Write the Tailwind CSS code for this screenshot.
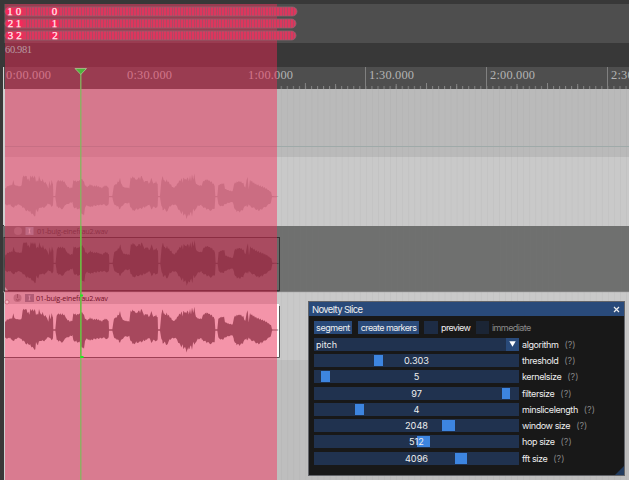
<!DOCTYPE html>
<html lang="en">
<head>
  <meta charset="UTF-8" />
  <meta name="viewport" content="width=device-width, initial-scale=1.0" />
  <title>Novelty Slice</title>
  <script src="https://cdn.jsdelivr.net/npm/@tailwindcss/browser@4"></script>
</head>
<body class="w-[629px] h-[480px] overflow-hidden bg-[#383838]">
  <main class="relative w-[629px] h-[480px] overflow-hidden">

    <!-- Arrange view -->
    <svg class="block" width="629" height="480" viewBox="0 0 629 480" font-family="Liberation Serif, serif">
      <defs>
        <pattern id="grid" x="2.9" y="0" width="6.05" height="10" patternUnits="userSpaceOnUse">
          <rect width="1" height="10" fill="#777" fill-opacity=".07" />
        </pattern>
        <pattern id="minor" x="2.4" y="0" width="6.05" height="200" patternUnits="userSpaceOnUse">
          <rect width="1" height="200" fill="#858585" />
        </pattern>
        <pattern id="regions" width="11" height="40" patternUnits="userSpaceOnUse">
          <path d="M1.5 0v40M4.5 0v40M7.500 0v40M9.500 0v40" stroke="#9c5068" stroke-width=".9" opacity=".8" />
        </pattern>
      </defs>

      <!-- Ruler lanes -->
      <rect width="629" height="480" fill="#383838" />
      <rect x="4" y="4" width="625" height="39" fill="#4e4e4e" />
      <rect x="3" y="67" width="626" height="22" fill="#4e4e4e" />
      <rect x="277" y="86" width="352" height="3" fill="url(#minor)" />
      <path d="M305.4 83v6M335.6 84v5M396.2 84v5M426.5 83v6M456.7 84v5M517 84v5M547.5 83v6M577.7 84v5" stroke="#858585" />
      <path d="M3.5 67v22M365.5 67v22M486.5 67v22M607.5 67v22" stroke="#808080" />
      <g font-size="12.4" fill="#b4b4b4">
        <text x="6" y="78.500" textLength="45">0:00.000</text>
        <text x="127" y="78.500" textLength="45">0:30.000</text>
        <text x="248" y="78.500" textLength="45">1:00.000</text>
        <text x="369" y="78.500" textLength="45">1:30.000</text>
        <text x="490" y="78.500" textLength="45">2:00.000</text>
        <text x="611" y="78.500" textLength="45">2:30.000</text>
      </g>

      <!-- Track lanes -->
      <rect x="4" y="89" width="625" height="68" fill="#bababa" />
      <rect x="4" y="157" width="625" height="69" fill="#c9c9c9" />
      <rect x="3" y="226" width="626" height="66" fill="#6f706f" />
      <rect x="4" y="292" width="625" height="68" fill="#c9c9c9" />
      <rect x="4" y="360" width="625" height="120" fill="#bebebe" />
      <rect x="277" y="89" width="352" height="391" fill="url(#grid)" />
      <path d="M4 146.500H629" stroke="#9faaa9" />
      <path d="M3 292H629" stroke="#aaa" stroke-width=".6" />

      <!-- Items -->
      <rect x="4" y="237.500" width="275.500" height="53" fill="#686968" stroke="#333" />
      <path d="M4 291H279.500" stroke="#333" />
      <rect x="4" y="304" width="273" height="53" fill="#efebeb" />
      <rect x="277" y="304" width="2" height="53" fill="#fff" />
      <path d="M4 357.500H279.500V306" fill="none" stroke="#555" />
      <path id="wave1" transform="translate(0 88.700)" fill="#a6a6a6" />
      <path id="wave2" transform="translate(.3 155.300)" fill="#434343" />
      <path id="wave3" transform="translate(0 222)" fill="#656463" />

      <!-- Item headers -->
      <g font-family="Open Sans, sans-serif" font-size="7.300">
        <circle cx="18" cy="231" r="4" fill="#8a8a8a" />
        <rect x="25.500" y="227" width="8" height="8" fill="#8f9da5" />
        <path d="M28.500 229h2M29.500 229v4M28.500 233h2" stroke="#d5d5d5" stroke-width=".9" />
        <text x="37" y="234" textLength="71" fill="#3a3a3a">01-buig-einefrau2.wav</text>
        <circle cx="17.500" cy="298" r="4" fill="#999" />
        <path d="M17.500 294v4M16 299.500q1.500 1.500 3.500 0" stroke="#686868" fill="none" />
        <rect x="25" y="294" width="9" height="8" fill="#78858f" />
        <path d="M28.500 296h2M29.500 296v4M28.500 300h2" stroke="#c8d0d8" stroke-width=".9" />
        <text x="36" y="301" textLength="72" fill="#000">01-buig-einefrau2.wav</text>
      </g>

      <!-- Time selection -->
      <rect x="5" y="4" width="272" height="476" fill="#fb2655" fill-opacity=".445" />
      <path d="M3.500 67v158M4.500 89v137M4.500 304v53M4.500 358v122" stroke="#cfcfcf" />
      <path d="M5 287l3 3.500H5z" fill="#d1909b" />
      <circle cx="7" cy="302" r="2" fill="#f7b4bf" stroke="#c2596d" stroke-width=".7" />
      <text x="5" y="52.500" font-size="10.500" textLength="27" fill="#b99aa2">60.981</text>

      <!-- Region markers -->
      <g fill="#dd365d" stroke="#8e6670" stroke-width=".8">
        <rect x="5" y="7" width="292" height="9" rx="4.500" />
        <rect x="5" y="19" width="291" height="9" rx="4.500" />
        <rect x="5" y="31" width="291" height="9" rx="4.500" />
      </g>
      <rect x="24" y="7" width="270" height="9" fill="url(#regions)" />
      <rect x="24" y="19" width="270" height="9" fill="url(#regions)" />
      <rect x="24" y="31" width="270" height="9" fill="url(#regions)" />
      <g fill="#f5295a">
        <circle cx="9.500" cy="11.500" r="4" /><circle cx="18.500" cy="11.500" r="4.300" /><circle cx="54.500" cy="11.500" r="4" />
        <circle cx="10" cy="23.500" r="4" /><circle cx="18.500" cy="23.500" r="4.300" /><circle cx="54.500" cy="23.500" r="4" />
        <circle cx="10" cy="35.500" r="4" /><circle cx="18.500" cy="35.500" r="4.300" /><circle cx="54.500" cy="35.500" r="4" />
      </g>
      <g font-size="11" fill="#ffe8ec" stroke="#ffe8ec" stroke-width=".25" text-anchor="middle">
        <text x="10" y="15">1</text><text x="18.500" y="15">0</text><text x="54.500" y="15">0</text>
        <text x="10.500" y="27">2</text><text x="18.500" y="27">1</text><text x="54.500" y="27">1</text>
        <text x="10.500" y="39">3</text><text x="19" y="39">2</text><text x="55" y="39">2</text>
      </g>

      <!-- Playhead -->
      <path d="M80.800 73V480" stroke="#83b85d" stroke-width="1.300" />
      <path d="M80.800 226V358" stroke="#67bd3c" stroke-width="1.300" />
      <path d="M75 68.500h11.500l-5.700 6z" fill="#4fb43c" stroke="#b8c89c" stroke-width=".7" />
      <path d="M80 295.500h3M80.500 357h3" stroke="#22e822" stroke-width="2" />
    </svg>

    <!-- Plugin window -->
    <section class="absolute left-[308px] top-[301px] w-[317px] h-[175px] border border-[#626469] bg-[#181818] font-['Inter',sans-serif] text-[9px] leading-[13px] text-[#eee]">
      <header class="flex h-[14px] items-center justify-between bg-[#294a7a] pl-[3px] pr-1">
        <h1 class="text-[9.5px] tracking-[-0.65px]">Novelty Slice</h1>
        <svg width="7" height="7" viewBox="0 0 7 7" stroke="#eee" stroke-width="1.200"><path d="M1 1l5 5M6 1l-5 5" /></svg>
      </header>

      <div class="flex h-[13px] mt-[5px] ml-[5px] tracking-[-0.6px]">
        <button class="w-[38px] bg-[#294a7a] tracking-[-0.45px]">segment</button>
        <button class="ml-[6px] w-[61px] whitespace-nowrap bg-[#294a7a]">create markers</button>
        <span class="ml-[5px] w-[14px] bg-[#1d2c45]"></span>
        <span class="ml-[3px] w-[29px]">preview</span>
        <span class="ml-[6px] w-[13px] bg-[#1b2535]"></span>
        <span class="ml-[3px] text-[#8a8a8a]">immediate</span>
      </div>

      <div id="params" class="mt-[3.7px] ml-[5px] flex flex-col gap-[3.3px]">
        <div class="flex h-[13px]">
          <div class="flex w-[205px] items-center justify-between bg-[#20324f] pl-[2px]">
            <span>pitch</span>
            <span class="flex h-[13px] w-[13px] items-center justify-center bg-[#294a7a]">
              <svg width="7" height="6" viewBox="0 0 7 6" fill="#fff"><path d="M.3.300h6.400L3.500 5.700z" /></svg>
            </span>
          </div>
          <span class="ml-[3px] tracking-[-0.4px]">algorithm</span><span class="ml-[6px] text-[#858585]">(?)</span>
        </div>
      </div>
      <svg class="absolute bottom-0 right-0" width="9" height="9"><path d="M9 0v9H0z" fill="#213b5e" /></svg>
    </section>
  </main>

  <script>
    // Envelope rows: x, top, bottom (third-pixel units, centre line at 324)
    const firstHalf = [
      [12,315,330],[15,300,348],[22,293,350],[30,290,348],[36,289,352],[40,277,358],[45,290,350],[60,293,348],[65,290,350],
      [68,263,357],[80,262,365],[82,270,360],[88,275,372],[92,263,368],[95,264,378],[106,265,380],[108,278,362],[115,275,368],
      [117,264,360],[120,268,360],[123,280,356],[128,270,352],[130,280,358],[138,282,350],[145,298,345],[148,278,345],[152,290,350],
      [155,276,352],[159,285,350],[160,322,326],[166,322,326],[170,280,352],[175,276,358],[190,277,360],[195,282,352],[200,292,348],
      [210,298,342],[217,296,340],[220,275,355],[230,278,358],[240,275,362],[246,270,380],[252,280,378],[255,290,355],[262,295,350],
      [270,288,356],[280,292,352],[290,292,350],[300,295,348],[306,298,348],[312,292,348],[320,291,350],[326,298,346],[327,322,326],
      [337,322,326],[342,290,345],[350,285,352],[357,276,357],[360,270,362],[366,290,352],[372,296,345],[388,298,342],[392,268,358],
      [400,265,365],[410,275,360],[415,265,360],
    ];
    const secondHalf = [
      [420,270,355],[425,262,358],[432,280,355],[440,275,352],[448,285,350],[454,268,360],[460,285,355],[468,280,358],[473,285,352],
      [474,322,326],[480,322,326],[484,275,350],[488,265,362],[495,280,360],[500,275,368],[510,285,352],[520,298,348],[528,292,350],
      [535,280,362],[545,272,375],[548,280,370],[550,268,384],[555,270,378],[559,275,388],[562,264,385],[566,276,378],[570,265,378],
      [573,275,368],[576,260,380],[580,270,360],[583,258,365],[588,285,358],[595,290,350],[605,290,350],[610,278,355],[620,272,362],
      [635,280,365],[644,290,358],[646,322,326],[652,322,326],[655,290,348],[665,285,352],[672,285,350],[675,300,346],[685,305,342],
      [698,308,340],[702,285,355],[710,280,368],[720,278,370],[730,285,362],[736,298,350],[740,270,352],[743,268,356],[746,300,345],
      [750,275,352],[765,285,360],[775,290,365],[785,293,362],[800,300,352],[813,310,342],[816,322,326],[835,323,325],
    ];
    const rows = firstHalf.concat(secondHalf);

    // One peak per pixel column, with a little roughness on the loud parts
    const upper = [];
    const lower = [];
    for (let i = 0; i < rows.length - 1; i++) {
      const [x0, t0, b0] = rows[i];
      const [x1, t1, b1] = rows[i + 1];
      for (let x = x0; x < x1; x += 3) {
        const k = (x - x0) / (x1 - x0);
        const t = t0 + (t1 - t0) * k;
        const b = b0 + (b1 - b0) * k;
        const rough = b - t > 20 ? (b - t) / 28 : 0;
        upper.push((x / 3).toFixed(2) + " " + ((t + Math.sin(x * 5.3) * rough) / 3).toFixed(2));
        lower.unshift((x / 3).toFixed(2) + " " + ((b + Math.sin(x * 3.7) * rough) / 3).toFixed(2));
      }
    }
    for (const id of ["wave1", "wave2", "wave3"]) {
      document.getElementById(id).setAttribute("d", "M" + upper.join("L") + "L278.3 107.7L278.3 108.3L" + lower.join("L") + "Z");
    }

    // Sliders: label, value, grab offset, grab width
    const sliders = [
      ["threshold", "0.303", 60, 8.5],
      ["kernelsize", "5", 7, 9],
      ["filtersize", "97", 187.5, 8.5],
      ["minslicelength", "4", 40.5, 9],
      ["window size", "2048", 128, 13],
      ["hop size", "512", 103, 12.5],
      ["fft size", "4096", 141, 12],
    ];
    const params = document.getElementById("params");
    for (const [label, value, x, w] of sliders) {
      params.insertAdjacentHTML("beforeend", `
        <div class="flex h-[13px] whitespace-nowrap">
          <div class="relative w-[205px] bg-[#20324f] text-center">
            <span class="absolute top-px h-[11px] bg-[#3d85e0]" style="left:${x}px;width:${w}px"></span>
            <span class="relative text-[9.2px]">${value}</span>
          </div>
          <span class="ml-[3px] tracking-[-0.4px]">${label}</span><span class="ml-[6px] text-[#858585]">(?)</span>
        </div>`);
    }
  </script>
</body>
</html>
